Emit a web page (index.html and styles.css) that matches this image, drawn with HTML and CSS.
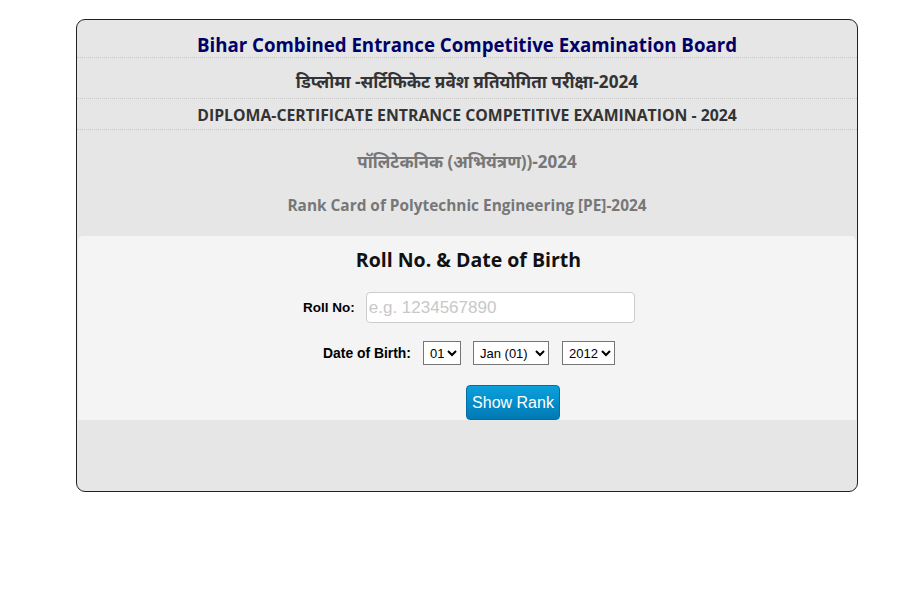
FILE: index.html
```html
<!DOCTYPE html>
<html>
<head>
<meta charset="utf-8">
<link rel="stylesheet" href="styles.css">
</head>
<body>
<div class="card">
  <div class="hrow title">Bihar Combined Entrance Competitive Examination Board</div>
  <div class="hrow hindi">डिप्लोमा -सर्टिफिकेट प्रवेश प्रतियोगिता परीक्षा-2024</div>
  <div class="hrow caps">DIPLOMA-CERTIFICATE ENTRANCE COMPETITIVE EXAMINATION - 2024</div>
  <div class="sub">
    <div class="sub-hindi">पॉलिटेकनिक (अभियंत्रण))-2024</div>
    <div class="sub-eng">Rank Card of Polytechnic Engineering [PE]-2024</div>
  </div>
  <div class="panel">
    <h2 class="form-title">Roll No. &amp; Date of Birth</h2>
    <div class="frow rollrow">
      <label class="lbl lbl-roll">Roll No:</label>
      <input class="roll" type="text" placeholder="e.g. 1234567890">
    </div>
    <div class="frow dob">
      <label class="lbl lbl-dob">Date of Birth:</label>
      <select class="sel s-day"><option>01</option></select>
      <select class="sel s-mon"><option>Jan (01)</option></select>
      <select class="sel s-yr"><option>2012</option></select>
    </div>
    <div class="frow btnrow">
      <button class="btn">Show Rank</button>
    </div>
  </div>
</div>
</body>
</html>
```

FILE: styles.css
```css
body {
  margin: 0;
  background: #fff;
  font-family: "Open Sans", "Noto Sans", sans-serif;
}
.card {
  margin: 19px 0 0 76px;
  width: 780px;
  height: 471px;
  border: 1px solid #222;
  border-radius: 9px;
  background: #e6e6e6;
  box-sizing: content-box;
  overflow: hidden;
}
.hrow {
  text-align: center;
  font-weight: bold;
  border-bottom: 1px dotted #c8c8c8;
}
.title {
  color: #000066;
  font-size: 18.7px;
  height: 37px;
  line-height: 50px;
}
.hindi {
  color: #333;
  font-size: 17.2px;
  height: 40px;
  line-height: 48px;
}
.caps {
  color: #333;
  font-size: 15.8px;
  height: 30px;
  line-height: 32px;
}
.sub {
  text-align: center;
  font-weight: bold;
  color: #777;
  height: 106px;
}
.sub-hindi {
  font-size: 17px;
  padding-top: 18px;
  line-height: 28px;
}
.sub-eng {
  font-size: 15.4px;
  padding-top: 19px;
  line-height: 22px;
}
.panel {
  background: #f4f4f4;
  height: 184px;
  margin: 0 1px;
  border-radius: 5px 5px 0 0;
}
.form-title {
  margin: 0 0 0 3px;
  text-align: center;
  font-size: 19.5px;
  color: #111;
  padding-top: 11px;
  line-height: 26px;
}
.frow {
  display: flex;
  align-items: center;
}
.lbl {
  font-family: "Liberation Sans", Arial, sans-serif;
  font-weight: bold;
  color: #000;
}
.rollrow { margin-top: 19px; }
.lbl-roll {
  font-size: 13.5px;
  margin-left: 225px;
  margin-right: 11px;
}
.roll {
  width: 269px;
  height: 31px;
  box-sizing: border-box;
  border: 1px solid #ccc;
  border-radius: 4px;
  background: #fff;
  font-family: "Liberation Sans", Arial, sans-serif;
  font-size: 17px;
  padding: 0 2px;
}
.roll::placeholder { color: #c8c8c8; }
.dob { margin-top: 18px; }
.lbl-dob { font-size: 13.9px; margin-left: 245px; margin-right: 12px; }
.sel {
  height: 24px;
  font-family: "Liberation Sans", Arial, sans-serif;
  font-size: 13px;
  border: 1px solid #767676;
  border-radius: 0;
  background: #fff;
  color: #000;
  padding: 0 0 0 2px;
}
.s-day { width: 38px; margin-right: 12px; }
.s-mon { width: 76px; margin-right: 13px; }
.s-yr { width: 53px; }
.btnrow { margin-top: 20px; }
.btn {
  margin-left: 388px;
  width: 94px;
  height: 35px;
  border: 1px solid #0a6c9c;
  border-radius: 4px;
  background: linear-gradient(#0aa1dc, #0079b5);
  color: #fff;
  font-family: "Liberation Sans", Arial, sans-serif;
  font-size: 16px;
  padding: 0;
}
```
